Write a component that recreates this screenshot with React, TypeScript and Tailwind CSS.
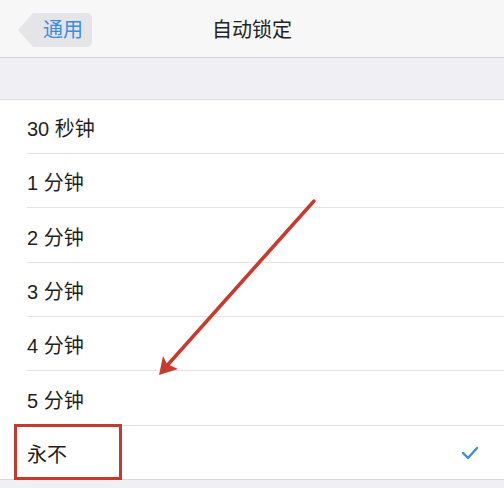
import React from "react";

const font = { fontFamily: '"Liberation Sans", "Noto Sans CJK SC", sans-serif' };

const options = [
  { label: "30 秒钟", h: "h-[54px]" },
  { label: "1 分钟", h: "h-[54px]" },
  { label: "2 分钟", h: "h-[55px]" },
  { label: "3 分钟", h: "h-[54px]" },
  { label: "4 分钟", h: "h-[54px]" },
  { label: "5 分钟", h: "h-[55px]" },
  { label: "永不", h: "h-[53px]" },
];

export default function App() {
  return (
    <div className="relative w-[504px] h-[488px] overflow-hidden bg-[#efeff4] text-[#1f1f21]" style={font}>
      {/* Nav bar */}
      <div className="relative flex items-center justify-center h-[58px] pt-[2px] bg-[#f7f7f8] border-b border-[#d2d2d6]">
        <div className="absolute left-[18px] top-[13px] flex items-center h-[34px]">
          <div className="w-0 h-0 border-y-[17px] border-y-transparent border-r-[15px] border-r-[#e5e5e8]" />
          <div className="flex items-center h-[34px] pl-[10px] pr-[9px] bg-[#e5e5e8] rounded-r-[5px] text-[20px] text-[#3d8ddc]">
            通用
          </div>
        </div>
        <span className="text-[20px] text-[#222]">自动锁定</span>
      </div>

      {/* Spacer */}
      <div className="h-[42px] border-b border-[#dcdce0]" />

      {/* List */}
      <div className="bg-white border-b border-[#d8d8dc]">
        {options.map((o, i) => (
          <div key={o.label} className={`${o.h} pl-[27px]`}>
            <div
              className={`flex items-center justify-between h-full pt-[5px] pr-[27px] ${
                i < options.length - 1 ? "border-b border-[#e3e3e6]" : ""
              }`}
            >
              <span className="text-[20px] leading-none">{o.label}</span>
              {i === options.length - 1 && (
                <svg width="18" height="14" viewBox="0 0 18 14" className="mr-[-2px] mb-[4px]">
                  <path d="M2 7l5 5L16 2" fill="none" stroke="#3d8ddc" strokeWidth="2.4" strokeLinecap="round" strokeLinejoin="round" />
                </svg>
              )}
            </div>
          </div>
        ))}
      </div>

      {/* Annotation: red box */}
      <div className="absolute left-[14px] top-[424px] w-[108px] h-[56px] border-[3px] border-[#c53a2d]" />

      {/* Annotation: arrow */}
      <svg className="absolute inset-0 pointer-events-none" width="504" height="488" viewBox="0 0 504 488">
        <line x1="314" y1="201" x2="164" y2="369" stroke="#c93a2c" strokeWidth="3.5" strokeLinecap="round" />
        <polygon points="159,375 163,356 167,364 178,369" fill="#c93a2c" />
      </svg>
    </div>
  );
}
